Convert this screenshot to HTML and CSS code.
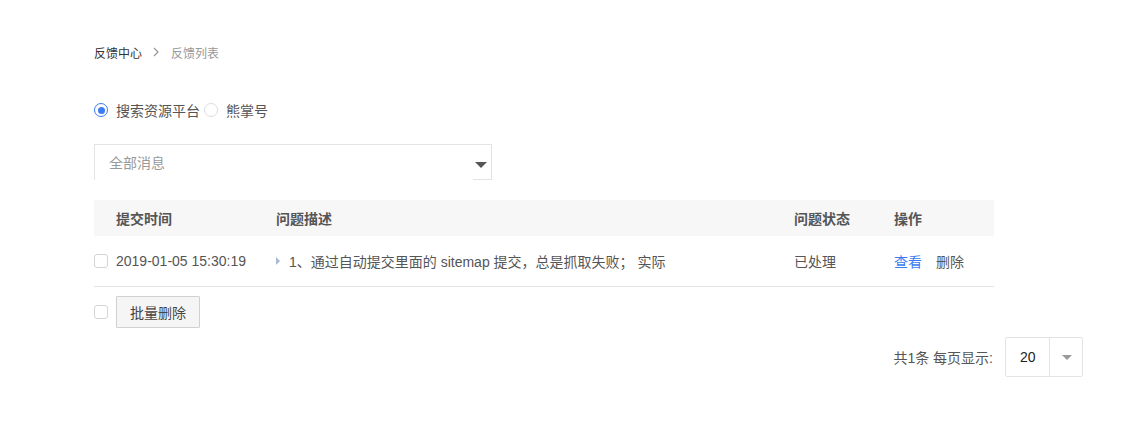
FILE: index.html
```html
<!DOCTYPE html>
<html lang="zh-CN">
<head>
    <meta charset="UTF-8">
    <title>反馈列表</title>
    <link rel="stylesheet" href="styles.css">
</head>
<body>
    <div class="page">
        <div class="breadcrumb">
            <span class="crumb-home">反馈中心</span>
            <svg class="crumb-sep" width="6" height="10" viewBox="0 0 6 10"><path d="M1 1l4 4-4 4" fill="none" stroke="#999" stroke-width="1.2"/></svg>
            <span class="crumb-current">反馈列表</span>
        </div>

        <div class="radios">
            <label class="radio checked"><span class="radio-dot"></span>搜索资源平台</label>
            <label class="radio"><span class="radio-dot"></span>熊掌号</label>
        </div>

        <div class="select">
            <span class="select-text">全部消息</span>
            <span class="select-arrow"></span>
        </div>

        <div class="table">
            <div class="row head">
                <div class="col col-time">提交时间</div>
                <div class="col col-desc">问题描述</div>
                <div class="col col-status">问题状态</div>
                <div class="col col-ops">操作</div>
            </div>
            <div class="row body">
                <div class="col col-check"><span class="checkbox"></span></div>
                <div class="col col-time">2019-01-05 15:30:19</div>
                <div class="col col-desc"><span class="expand"></span>1、通过自动提交里面的 sitemap 提交，总是抓取失败； 实际</div>
                <div class="col col-status">已处理</div>
                <div class="col col-ops"><a class="link">查看</a><a class="link-del">删除</a></div>
            </div>
        </div>

        <div class="batch">
            <span class="checkbox"></span>
            <button class="btn">批量删除</button>
        </div>

        <div class="pager">
            <span class="pager-text">共1条 每页显示:</span>
            <div class="pager-select">
                <span class="pager-value">20</span>
                <span class="pager-arrow"></span>
            </div>
        </div>
    </div>
</body>
</html>
```

FILE: styles.css
```css
* {
    margin: 0;
    padding: 0;
    box-sizing: border-box;
}

body {
    font-family: "Liberation Sans", "Noto Sans CJK SC", sans-serif;
    font-size: 14px;
    color: #333;
    background: #fff;
}

.page {
    padding: 42px 42px 0 94px;
}

.breadcrumb {
    display: flex;
    align-items: center;
    height: 20px;
    font-size: 12px;
}

.crumb-home {
    color: #333;
}

.crumb-sep {
    margin: 0 12px 0 11px;
}

.crumb-current {
    color: #999;
}

.radios {
    display: flex;
    align-items: center;
    height: 20px;
    margin-top: 38px;
    color: #555;
}

.radio {
    display: flex;
    align-items: center;
    margin-right: 4px;
}

.radio-dot {
    width: 14px;
    height: 14px;
    border: 1px solid #ddd;
    border-radius: 50%;
    margin-right: 8px;
    position: relative;
}

.radio.checked .radio-dot {
    border-color: #3c7cf0;
}

.radio.checked .radio-dot::after {
    content: "";
    position: absolute;
    left: 2.5px;
    top: 2.5px;
    width: 7px;
    height: 7px;
    border-radius: 50%;
    background: #3c7cf0;
}

.select {
    display: flex;
    align-items: center;
    justify-content: space-between;
    width: 398px;
    height: 36px;
    margin-top: 24px;
    border: 1px solid #e3e3e3;
    border-bottom: none;
    padding-left: 14px;
}

.select-text {
    color: #999;
    margin-top: -1px;
}

.select-arrow {
    align-self: stretch;
    width: 18px;
    border-bottom: 1px solid #e3e3e3;
    position: relative;
}

.select-arrow::after {
    content: "";
    position: absolute;
    left: 2px;
    top: 17px;
    border-left: 6px solid transparent;
    border-right: 6px solid transparent;
    border-top: 6px solid #555;
}

.table {
    width: 900px;
    margin-top: 20px;
}

.row {
    display: flex;
    align-items: center;
}

.row.head {
    height: 36px;
    background: #f7f7f7;
    font-weight: bold;
    color: #555;
    padding-left: 22px;
}

.row.body {
    height: 51px;
    border-bottom: 1px solid #e5e5e5;
    color: #555;
}

.col-check {
    width: 22px;
    display: flex;
}

.col-time {
    width: 160px;
}

.col-desc {
    width: 518px;
    display: flex;
    align-items: center;
}

.col-status {
    width: 100px;
}

.col-ops {
    flex: 1;
}

.checkbox {
    display: inline-block;
    width: 14px;
    height: 14px;
    border: 1px solid #d5d5d5;
    border-radius: 3px;
    background: #fff;
}

.expand {
    width: 0;
    height: 0;
    border-top: 4px solid transparent;
    border-bottom: 4px solid transparent;
    border-left: 4px solid #a9b8d6;
    margin-right: 9px;
}

.link {
    color: #3c7cf0;
    margin-right: 14px;
}

.link-del {
    color: #555;
}

.batch {
    display: flex;
    align-items: center;
    margin-top: 9px;
}

.batch .checkbox {
    margin-right: 8px;
}

.btn {
    width: 84px;
    height: 32px;
    font-family: inherit;
    font-size: 14px;
    color: #444;
    background: #f5f5f5;
    border: 1px solid #d0d0d0;
    border-radius: 1px;
}

.pager {
    display: flex;
    align-items: center;
    justify-content: flex-end;
    margin-top: 9px;
    width: 989px;
}

.pager-text {
    color: #555;
    margin-right: 12px;
}

.pager-select {
    display: flex;
    width: 78px;
    height: 40px;
    border: 1px solid #e3e3e3;
    border-radius: 2px;
}

.pager-value {
    width: 44px;
    border-right: 1px solid #e3e3e3;
    display: flex;
    align-items: center;
    padding-left: 14px;
    color: #222;
}

.pager-arrow {
    flex: 1;
    position: relative;
}

.pager-arrow::after {
    content: "";
    position: absolute;
    left: 12px;
    top: 17px;
    border-left: 5px solid transparent;
    border-right: 5px solid transparent;
    border-top: 5px solid #999;
}
```
